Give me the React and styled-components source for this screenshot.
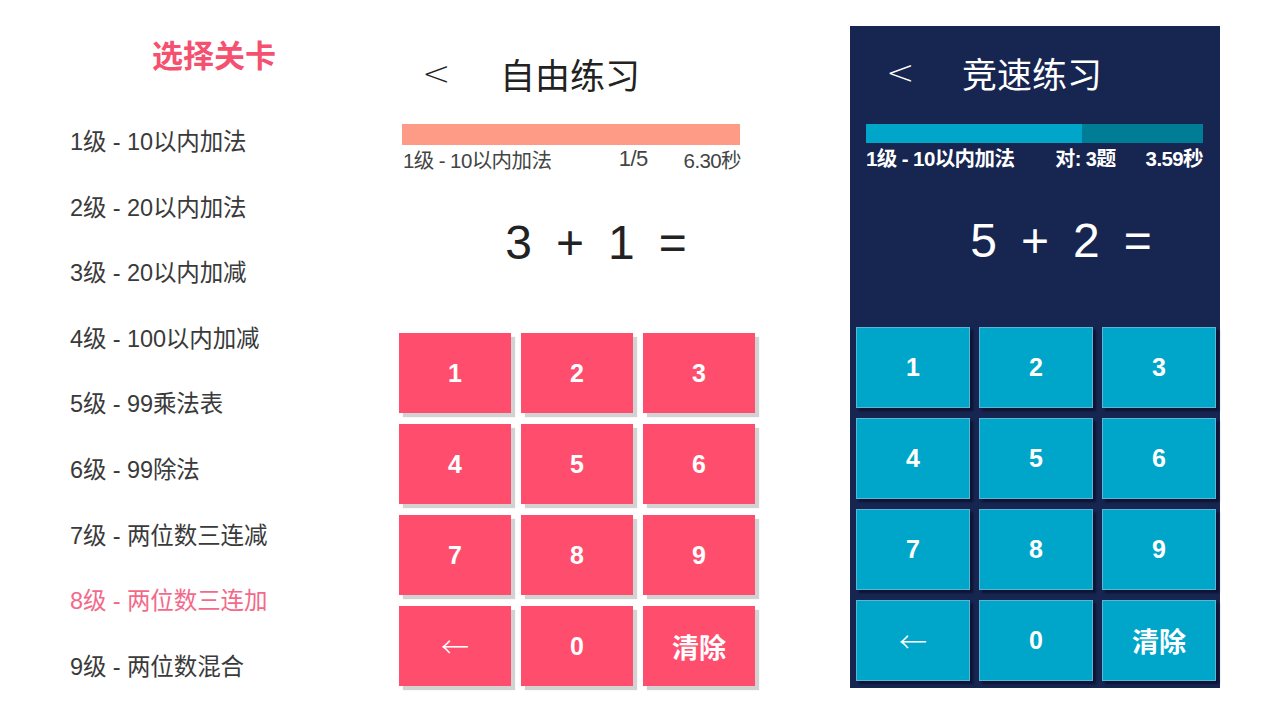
import React from 'react';
import styled, { createGlobalStyle } from 'styled-components';

const GlobalStyle = createGlobalStyle`
    body {
        margin: 0;
        background: #ffffff;
        font-family: "Liberation Sans", "Noto Sans CJK SC", sans-serif;
    }
`;

const levels = [
    '1级 - 10以内加法',
    '2级 - 20以内加法',
    '3级 - 20以内加减',
    '4级 - 100以内加减',
    '5级 - 99乘法表',
    '6级 - 99除法',
    '7级 - 两位数三连减',
    '8级 - 两位数三连加',
    '9级 - 两位数混合',
];

const keys = ['1', '2', '3', '4', '5', '6', '7', '8', '9', '←', '0', '清除'];

let Page = styled.div`
    display: flex;
    align-items: flex-start;
    width: 1280px;
    height: 720px;
    overflow: hidden;
`;

// 左边关卡列表
let LevelColumn = styled.div`
    width: 328px;
    padding-left: 70px;
    display: flex;
    flex-direction: column;
`;

let LevelTitle = styled.h2`
    margin: 37px 0 0 82px;
    height: 40px;
    line-height: 40px;
    font-size: 31px;
    font-weight: 700;
    color: #f5506f;
`;

let LevelList = styled.ul`
    list-style: none;
    margin: 33px 0 0;
    padding: 0;
`;

let LevelItem = styled.li`
    height: 65.6px;
    line-height: 65.6px;
    font-size: 23.5px;
    letter-spacing: -0.1px;
    color: ${(p) => (p.$active ? '#f3698a' : '#3a3a3a')};
`;

// 练习面板
let Panel = styled.div`
    width: ${(p) => (p.$dark ? '370px' : '362px')};
    height: ${(p) => (p.$dark ? '662px' : '700px')};
    margin-top: ${(p) => (p.$dark ? '26px' : '0')};
    margin-left: ${(p) => (p.$dark ? '90px' : '0')};
    background: ${(p) => (p.$dark ? '#172551' : 'transparent')};
    color: ${(p) => (p.$dark ? '#ffffff' : '#222222')};
    display: flex;
    flex-direction: column;
`;

let Header = styled.div`
    display: flex;
    align-items: center;
    height: 50px;
    padding-top: ${(p) => (p.$dark ? '21px' : '48px')};
    padding-bottom: ${(p) => (p.$dark ? '1px' : '2px')};
    padding-left: ${(p) => (p.$dark ? '36px' : '24px')};
`;

let BackArrow = styled.span`
    width: ${(p) => (p.$dark ? '76px' : '78px')};
    font-size: 34px;
    font-family: "DejaVu Sans", "Liberation Sans", sans-serif;
    font-weight: 200;
`;

let Title = styled.span`
    font-size: 35px;
    font-family: "Noto Sans CJK SC", sans-serif;
    font-weight: 400;
`;

let Progress = styled.div`
    display: flex;
    width: ${(p) => (p.$dark ? '337px' : '338px')};
    height: ${(p) => (p.$dark ? '19px' : '21px')};
    margin-top: ${(p) => (p.$dark ? '26px' : '24px')};
    margin-left: ${(p) => (p.$dark ? '16px' : '4px')};
    background: ${(p) => (p.$dark ? '#007d96' : '#fe9b86')};
`;

let ProgressFill = styled.div`
    height: 100%;
    background: ${(p) => (p.$dark ? '#00a6c9' : '#fe9b86')};
`;

let InfoRow = styled.div`
    display: flex;
    align-items: center;
    width: ${(p) => (p.$dark ? '337px' : '338px')};
    height: 28px;
    margin-bottom: 2px;
    margin-left: ${(p) => (p.$dark ? '16px' : '5px')};
    font-size: ${(p) => (p.$dark ? '20.5px' : '20.5px')};
    font-weight: ${(p) => (p.$dark ? 700 : 400)};
    color: ${(p) => (p.$dark ? '#ffffff' : '#444444')};
    letter-spacing: -0.6px;
`;

let InfoLevel = styled.span`
    flex: 1;
`;

let InfoCount = styled.span`
    font-size: ${(p) => (p.$dark ? '20px' : '22px')};
    margin-right: ${(p) => (p.$dark ? '30px' : '36px')};
`;

let Equation = styled.div`
    display: flex;
    justify-content: center;
    gap: 24px;
    height: 60px;
    line-height: 60px;
    margin-top: 38px;
    padding-left: ${(p) => (p.$dark ? '52px' : '34px')};
    font-size: 48px;
`;

let Keypad = styled.div`
    display: grid;
    grid-template-columns: repeat(3, ${(p) => (p.$dark ? '114px' : '112px')});
    grid-auto-rows: ${(p) => (p.$dark ? '81px' : '80px')};
    column-gap: ${(p) => (p.$dark ? '9px' : '10px')};
    row-gap: ${(p) => (p.$dark ? '10px' : '11px')};
    margin-top: ${(p) => (p.$dark ? '56px' : '60px')};
    margin-left: ${(p) => (p.$dark ? '6px' : '1px')};
`;

let Key = styled.button`
    display: flex;
    align-items: center;
    justify-content: center;
    padding: 0;
    font-family: ${(p) =>
        p.$arrow
            ? '"Noto Sans CJK SC", sans-serif'
            : '"Liberation Sans", "Noto Sans CJK SC", sans-serif'};
    font-size: ${(p) => (p.$wide ? '27px' : p.$arrow ? '28px' : '25px')};
    font-weight: ${(p) => (p.$arrow ? 200 : 700)};
    color: #ffffff;
    background: ${(p) => (p.$dark ? '#00a6c9' : '#ff4e6d')};
    border: ${(p) => (p.$dark ? '1.5px solid #5bb6d6' : 'none')};
    box-shadow: ${(p) =>
        p.$dark ? '3px 3px 2px #0d1433' : '4px 4px 1px #d2d2d2'};
`;

const PracticePanel = ({ dark, title, count, time, expr, fill }) => (
    <Panel $dark={dark}>
        <Header $dark={dark}>
            <BackArrow $dark={dark}>&lt;</BackArrow>
            <Title>{title}</Title>
        </Header>
        <Progress $dark={dark}>
            <ProgressFill $dark={dark} style={{ width: `${fill}%` }} />
        </Progress>
        <InfoRow $dark={dark}>
            <InfoLevel>1级 - 10以内加法</InfoLevel>
            <InfoCount $dark={dark}>{count}</InfoCount>
            <span>{time}</span>
        </InfoRow>
        <Equation $dark={dark}>
            {expr.map((t, i) => (
                <span key={i}>{t}</span>
            ))}
        </Equation>
        <Keypad $dark={dark}>
            {keys.map((k) => (
                <Key key={k} $dark={dark} $wide={k === '清除'} $arrow={k === '←'}>
                    {k}
                </Key>
            ))}
        </Keypad>
    </Panel>
);

const App = () => {
    return (
        <Page>
            <GlobalStyle />
            <LevelColumn>
                <LevelTitle>选择关卡</LevelTitle>
                <LevelList>
                    {levels.map((l, i) => (
                        <LevelItem key={l} $active={i === 7}>
                            {l}
                        </LevelItem>
                    ))}
                </LevelList>
            </LevelColumn>
            <PracticePanel
                title="自由练习"
                count="1/5"
                time="6.30秒"
                expr={['3', '+', '1', '=']}
                fill={100}
            />
            <PracticePanel
                dark
                title="竞速练习"
                count="对: 3题"
                time="3.59秒"
                expr={['5', '+', '2', '=']}
                fill={64}
            />
        </Page>
    );
};

export default App;
